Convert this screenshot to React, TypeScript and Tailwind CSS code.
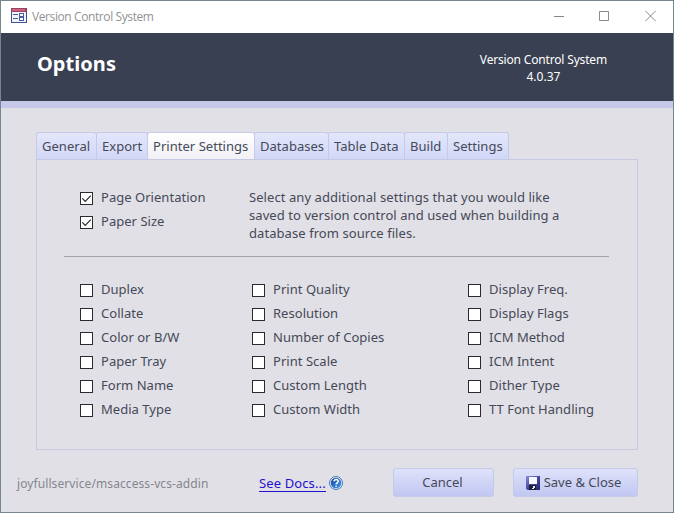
import React from "react";

const tabs = [
  { label: "General", width: "w-[61px]" },
  { label: "Export", width: "w-[52px]" },
  { label: "Printer Settings", width: "w-[108px]", active: true },
  { label: "Databases", width: "w-[75px]" },
  { label: "Table Data", width: "w-[77px]" },
  { label: "Build", width: "w-[44px]" },
  { label: "Settings", width: "w-[62px]" },
];

const columns = [
  { width: "w-[172px]", items: ["Duplex", "Collate", "Color or B/W", "Paper Tray", "Form Name", "Media Type"] },
  { width: "w-[216px]", items: ["Print Quality", "Resolution", "Number of Copies", "Print Scale", "Custom Length", "Custom Width"] },
  { width: "w-[130px]", items: ["Display Freq.", "Display Flags", "ICM Method", "ICM Intent", "Dither Type", "TT Font Handling"] },
];

function Check({ label, checked }: { label: string; checked?: boolean }) {
  return (
    <div className="flex h-6 items-start whitespace-nowrap">
      <span className="mt-[2px] block h-[13px] w-[13px] shrink-0 border border-[#2b2b2f] bg-white">
        {checked && (
          <svg viewBox="0 0 11 11" className="block h-[11px] w-[11px]" fill="none" stroke="#2b2b2f" strokeWidth="1.2">
            <path d="M1.3 5.4 4.2 8.3 9.8 2.7" />
          </svg>
        )}
      </span>
      <span className="-mt-px ml-2 leading-4 tracking-[0.03px]">{label}</span>
    </div>
  );
}

function FormIcon() {
  return (
    <svg viewBox="0 0 16 15" className="h-[15px] w-4" shapeRendering="crispEdges">
      <rect width="16" height="15" fill="#3e4f95" />
      <rect width="16" height="4" fill="#9c3f61" />
      <rect x="1" y="1" width="13" height="2" fill="#c96480" />
      <rect x="1" y="4" width="14" height="10" fill="#f3f5fc" />
      <path d="M2 6h5v1H2zM2 10h5v1H2z" fill="#4a5ba5" />
      <path d="M8.500 5.500h4v3h-4zM8.500 9.500h4v3h-4z" fill="#fff" stroke="#4a5ba5" />
    </svg>
  );
}

function SaveIcon() {
  return (
    <svg viewBox="0 0 14 14" className="h-[14px] w-[14px]">
      <defs>
        <linearGradient id="disk" x1="0" y1="0" x2="1" y2="1">
          <stop stopColor="#8a90da" />
          <stop offset=".5" stopColor="#4348a5" />
          <stop offset="1" stopColor="#252866" />
        </linearGradient>
      </defs>
      <path d="M0 0h14v14H1.500L0 12.500z" fill="url(#disk)" />
      <path d="M3 1h8v7H3z" fill="#f6f7ff" />
      <path d="M3 9h7v5H3z" fill="#1d1e3c" />
      <path d="M7 10h2v2H8v1H6v-1h1z" fill="#e8eaff" />
    </svg>
  );
}

function HelpIcon() {
  return (
    <svg viewBox="0 0 14 14" className="h-[14px] w-[14px]">
      <defs>
        <linearGradient id="help" x1="0" y1="0" x2="1" y2="1">
          <stop stopColor="#1d429c" />
          <stop offset="1" stopColor="#3b9aea" />
        </linearGradient>
      </defs>
      <circle cx="7" cy="7" r="6.500" fill="#d9e8f8" stroke="#4978b5" />
      <circle cx="7" cy="7" r="5.200" fill="url(#help)" />
      <path d="M5 5.300C5 3 9.200 3.100 9.200 5.300 9.200 6.800 7.100 6.800 7.100 8.500M7.100 9.700v1.300" fill="none" stroke="#fff" strokeWidth="1.500" />
    </svg>
  );
}

const button = "flex h-[29px] items-center justify-center rounded-[3px] border border-[#c5c9ea] bg-linear-to-b from-[#dfe2fa] to-[#c1c7f2]";

export default function App() {
  return (
    <div className="flex h-[513px] w-[674px] flex-col overflow-hidden border border-[#76868e] bg-[#e1e0e6] font-['Noto_Sans','Open_Sans',sans-serif] text-[13px] text-[#454958]">
      <div className="flex h-8 shrink-0 items-center bg-white pl-[10px] text-[#929292]">
        <span className="-mt-[3px]"><FormIcon /></span>
        <span className="ml-[5px] font-['Open_Sans','Noto_Sans',sans-serif] text-[12px] tracking-[-0.4px]">Version Control System</span>
        <svg viewBox="0 0 103 12" className="-mt-[2px] ml-auto mr-4 h-3 w-[103px]" fill="none" stroke="#888">
          <path d="M0 6.500h10M45.500 1.500h9v9h-9z" />
          <path d="m91.500 1 10 10m0-10-10 10" />
        </svg>
      </div>
      <header className="flex h-[68px] shrink-0 justify-between bg-[#394051] pl-9 pr-[66px] text-white">
        <h1 className="mt-4 text-[20px] leading-[30px] font-bold tracking-[0.05px]">Options</h1>
        <div className="mt-[18px] text-center text-[12px] leading-[17px] tracking-[-0.17px]">
          <div>Version Control System</div>
          <div className="tracking-normal">4.0.37</div>
        </div>
      </header>
      <div className="h-[7px] shrink-0 bg-[#c5c8e9]" />

      <main className="ml-[35px] mt-6 w-[602px]">
        <div className="flex h-[27px]">
          {tabs.map((t) => (
            <div
              key={t.label}
              className={`${t.width} -mr-px flex shrink-0 items-center rounded-t-[3px] border border-b-0 border-[#c6caea] pt-px pl-[5px] tracking-[0.03px] whitespace-nowrap ${t.active ? "bg-linear-to-b from-white to-[#f1f1f6]" : "bg-linear-to-b from-[#e4e7fa] to-[#d1d7f8]"}`}
            >
              {t.label}
            </div>
          ))}
        </div>
        <section className="h-[291px] border border-[#c6c9e3] px-[27px] pt-[30px]">
          <div className="ml-4 flex h-[66px]">
            <div className="w-[169px]">
              <Check label="Page Orientation" checked />
              <Check label="Paper Size" checked />
            </div>
            <p className="-mt-[2px] leading-[18px] tracking-[0.07px] whitespace-nowrap">
              Select any additional settings that you would like
              <br />
              saved to version control and used when building a
              <br />
              database from source files.
            </p>
          </div>
          <div className="h-px w-[545px] bg-[#a2a2a8]" />
          <div className="ml-4 mt-[25px] flex">
            {columns.map((c) => (
              <div key={c.items[0]} className={`${c.width} shrink-0`}>
                {c.items.map((item) => (
                  <Check key={item} label={item} />
                ))}
              </div>
            ))}
          </div>
        </section>
      </main>

      <footer className="mt-[18px] flex h-[29px] items-center pl-4">
        <span className="w-[242px] pt-[3px] text-[12px] tracking-[0.09px] text-[#85868e]">joyfullservice/msaccess-vcs-addin</span>
        <a className="h-[18px] border-b border-[#2411cf] leading-[19px] tracking-[0.12px] text-[#2411cf]">See Docs...</a>
        <span className="ml-[3px]"><HelpIcon /></span>
        <div className="ml-auto mr-[35px] flex gap-[19px]">
          <div className={`${button} w-[101px] pr-[2px]`}>Cancel</div>
          <div className={`${button} w-[125px] gap-1 pr-[5px]`}>
            <SaveIcon />
            <span className="-mr-px">Save &amp; Close</span>
          </div>
        </div>
      </footer>
    </div>
  );
}
